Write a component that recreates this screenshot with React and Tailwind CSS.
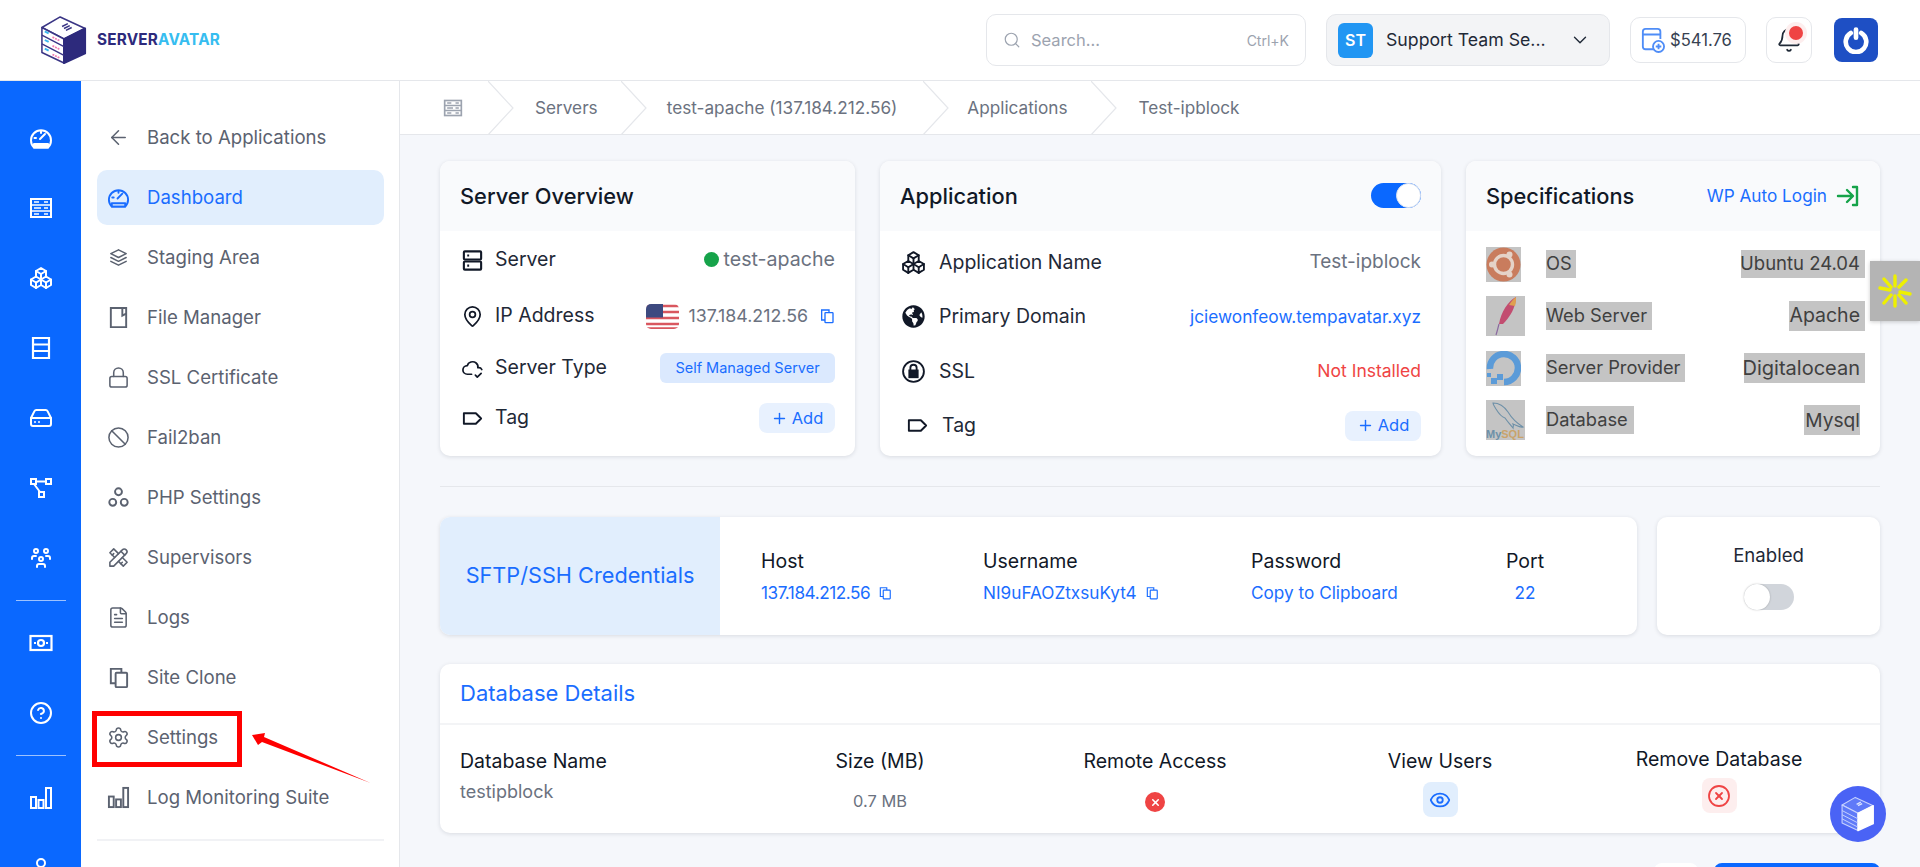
import {
  ArrowLeft,
  Lock,
  Ban,
  Settings,
  FileText,
  Search,
  ChevronDown,
  Bell,
  MapPin,
  Plus,
  HardDrive,
  CircleHelp,
  User,
  Eye,
  CircleX,
  X,
} from "lucide-react";
import {
  TbStack2,
  TbTools,
  TbCloudCheck,
  TbPackages,
  TbUsersGroup,
} from "react-icons/tb";
import { FaGlobeAmericas } from "react-icons/fa";

const TagIcon = ({ className }) => (
  <svg viewBox="0 0 24 24" fill="none" stroke="currentColor" strokeWidth="2" strokeLinejoin="round" className={className}>
    <path d="M3 6.5h12.5l5.5 5.5-5.5 5.500H3z" />
  </svg>
);

const CopyIcon = ({ className }) => (
  <svg viewBox="0 0 24 24" fill="none" stroke="currentColor" strokeWidth="2" className={className}>
    <rect x="9" y="7" width="12" height="15" rx="1" />
    <path d="M9 18H4V3h11v4" />
  </svg>
);

const FileCornerIcon = ({ className }) => (
  <svg viewBox="0 0 24 24" fill="none" stroke="currentColor" strokeWidth="2" className={className}>
    <path d="M4 2h16v20H4z" />
    <path d="M16 2v8l4-2" />
  </svg>
);

const CirclesIcon = ({ className }) => (
  <svg viewBox="0 0 24 24" fill="none" stroke="currentColor" strokeWidth="2" className={className}>
    <circle cx="12" cy="6" r="3.6" />
    <circle cx="6" cy="17" r="3.6" />
    <circle cx="18" cy="17" r="3.6" />
  </svg>
);

const BarsIcon = ({ className }) => (
  <svg viewBox="0 0 24 24" fill="none" stroke="currentColor" strokeWidth="2" className={className}>
    <rect x="2" y="11" width="5" height="11" />
    <rect x="9.5" y="14" width="5" height="8" />
    <rect x="17" y="2" width="5" height="20" />
  </svg>
);

const TableIcon = ({ className }) => (
  <svg viewBox="0 0 24 24" fill="none" stroke="currentColor" strokeWidth="2" className={className}>
    <rect x="2" y="3" width="20" height="18" />
    <path d="M2 9h20M2 15h20M5 6h5M15 6h4M5 12h7M15 12h4M5 18h5M15 18h4" strokeWidth="1.6" />
  </svg>
);

const NodesIcon = ({ className }) => (
  <svg viewBox="0 0 24 24" fill="none" stroke="currentColor" strokeWidth="2" className={className}>
    <rect x="2" y="3" width="5" height="5" />
    <rect x="17" y="3" width="5" height="5" />
    <rect x="10" y="16" width="5" height="5" />
    <path d="M7 5.5h10M5 8l6 8" />
  </svg>
);

const LockCircleIcon = ({ className }) => (
  <svg viewBox="0 0 24 24" fill="none" stroke="currentColor" strokeWidth="1.8" className={className}>
    <circle cx="12" cy="12" r="10" />
    <path d="M9 11V8.5a3 3 0 0 1 6 0V11" />
    <rect x="8" y="11" width="8" height="6.5" fill="currentColor" />
  </svg>
);

// speedometer with a band along the bottom, used in the rail and the menu
const GaugeIcon = ({ className, band = "none" }) => (
  <svg viewBox="0 0 24 24" fill="none" stroke="currentColor" strokeWidth="2" strokeLinecap="round" strokeLinejoin="round" className={className}>
    <path d="M5 21.500h14a10 10 0 1 0-14 0z" />
    <path d="M5 18h14v3.500H5z" fill={band} />
    <path d="M11 13l5-5M5.500 12H7M12 5.500V7" />
  </svg>
);

const RailGauge = ({ className }) => <GaugeIcon className={className} band="currentColor" />;

const ListIcon = ({ className }) => (
  <svg viewBox="0 0 24 24" fill="none" stroke="currentColor" strokeWidth="2.2" className={className}>
    <path d="M4 2h16v20H4zM4 8.500h16M4 15h16" />
  </svg>
);

const MoneyIcon = ({ className }) => (
  <svg viewBox="0 0 24 24" fill="none" stroke="currentColor" strokeWidth="2.2" className={className}>
    <rect x="1.500" y="5" width="21" height="14" />
    <circle cx="12" cy="12" r="3" />
    <path d="M5 12h2M17 12h2" />
  </svg>
);

const ServerIcon = ({ className }) => (
  <svg viewBox="0 0 24 24" fill="none" stroke="currentColor" strokeWidth="2.2" strokeLinejoin="round" className={className}>
    <rect x="3" y="2.500" width="18" height="8.500" rx="1" />
    <rect x="3" y="13" width="18" height="8.500" rx="1" />
    <path d="M6.500 6.800h2M6.500 17.300h2" />
  </svg>
);

const CubeLogo = ({ className }) => (
  <svg viewBox="0 0 50 52" className={className}>
    <path d="M21 2 47 14 25 25 2 13z" fill="#fff" stroke="#3a3585" strokeWidth="1.6" strokeLinejoin="round" />
    <path d="M2 13 25 25V50L2 39z" fill="#fff" stroke="#3a3585" strokeWidth="1.6" strokeLinejoin="round" />
    <path d="M25 25 47 14V40L25 50z" fill="#2d2a7c" stroke="#2d2a7c" strokeWidth="2" strokeLinejoin="round" />
    <path d="M2 21 25 33M2 30 25 42" stroke="#3a3585" strokeWidth="1.4" />
    <path d="M5 17l4 2M5 26l4 2M5 35l4 2" stroke="#39b6ee" strokeWidth="2" />
    <path d="M13 23l8 4M13 32l8 4M13 41l8 4" stroke="#f27ab0" strokeWidth="1.8" strokeDasharray="2 1" />
    <path d="M23 12l6-3M25 14l6-3M27 16l6-3" stroke="#3a3585" strokeWidth="1.6" />
  </svg>
);

const railTop = [RailGauge, TableIcon, TbPackages, ListIcon, HardDrive, NodesIcon, TbUsersGroup];

const RailItem = ({ icon: Icon }) => (
  <div className="flex h-[70px] w-full shrink-0 items-center justify-center">
    <Icon className="size-[24px] text-white" strokeWidth={2} />
  </div>
);

const Rail = () => (
  <div className="flex w-[81px] shrink-0 flex-col items-center bg-[#0a68ff] pt-[22px]">
    {railTop.map((Icon, i) => (
      <RailItem key={i} icon={Icon} />
    ))}
    <div className="my-[7px] h-px w-[50px] shrink-0 bg-white/60" />
    <RailItem icon={MoneyIcon} />
    <RailItem icon={CircleHelp} />
    <div className="my-[7px] h-px w-[50px] shrink-0 bg-white/60" />
    <RailItem icon={BarsIcon} />
    <RailItem icon={User} />
  </div>
);

const menu = [
  { label: "Back to Applications", icon: ArrowLeft },
  { label: "Dashboard", icon: GaugeIcon, active: true },
  { label: "Staging Area", icon: TbStack2 },
  { label: "File Manager", icon: FileCornerIcon },
  { label: "SSL Certificate", icon: Lock },
  { label: "Fail2ban", icon: Ban },
  { label: "PHP Settings", icon: CirclesIcon },
  { label: "Supervisors", icon: TbTools },
  { label: "Logs", icon: FileText },
  { label: "Site Clone", icon: CopyIcon },
  { label: "Settings", icon: Settings },
  { label: "Log Monitoring Suite", icon: BarsIcon },
];

const SubMenu = () => (
  <aside className="flex w-[319px] shrink-0 flex-col gap-[5px] border-r border-[#e5e7eb] bg-white pt-[29px] pr-[15px] pl-[16px]">
    {menu.map((m) => (
      <div
        key={m.label}
        className={`flex h-[55px] shrink-0 items-center gap-[17px] rounded-[10px] pl-[10px] text-[18.6px] ${
          m.active ? "bg-[#e1eefd] text-[#1a6dff]" : "text-[#5b6270]"
        }`}
      >
        <m.icon className="size-[23px]" strokeWidth={1.6} />
        {m.label}
      </div>
    ))}
    <div className="mt-[9px] h-[2px] shrink-0 bg-[#f1f2f5]" />
  </aside>
);

const Chevron = () => (
  <svg viewBox="0 0 26 54" fill="none" className="h-[54px] w-[26px] shrink-0">
    <path d="M0 0 25 27 0 54" stroke="#e5e7eb" strokeWidth="1.2" />
  </svg>
);

const Breadcrumb = () => (
  <div className="flex h-[54px] shrink-0 items-center border-b border-[#e5e7eb] bg-white pl-[43px] text-[17.2px] text-[#6b7280]">
    <TableIcon className="mr-[25px] size-[20px] text-[#9ca3af]" />
    <Chevron />
    <span className="mr-[23px] ml-[21px]">Servers</span>
    <Chevron />
    <span className="mr-[26px] ml-[20px]">test-apache (137.184.212.56)</span>
    <Chevron />
    <span className="mr-[23px] ml-[18px]">Applications</span>
    <Chevron />
    <span className="ml-[22px]">Test-ipblock</span>
  </div>
);

const Card = ({ className, children }) => (
  <div className={`overflow-hidden rounded-[10px] bg-white shadow-[0_1px_4px_rgba(17,24,39,0.12)] ${className}`}>{children}</div>
);

const CardHead = ({ title, children }) => (
  <div className="flex h-[70px] items-center justify-between bg-[#f9fafc] px-[20px] text-[21.8px] font-medium text-[#111827]">
    {title}
    {children}
  </div>
);

const AddBtn = () => (
  <button className="flex h-[30px] w-[76px] items-center justify-center gap-[4px] rounded-[8px] bg-[#e8f1fe] text-[16.5px] text-[#1a6dff]">
    <Plus className="size-[17px]" />
    Add
  </button>
);

const Row = ({ icon: Icon, label, h, iconClass = "size-[23px]", gap = "gap-[11px]", children }) => (
  <div className={`flex items-center justify-between ${h}`}>
    <div className={`flex items-center ${gap} text-[19.5px] text-[#1f2937]`}>
      <Icon className={`${iconClass} text-[#111827]`} strokeWidth={1.8} />
      {label}
    </div>
    {children}
  </div>
);

const UsFlag = () => (
  <svg viewBox="0 0 33 25" className="h-[25px] w-[33px] overflow-hidden rounded-[5px]">
    <rect width="33" height="25" fill="#fff" />
    <path d="M0 2h33M0 8h33M0 14h33M0 20h33M0 24.500h33" stroke="#d9575f" strokeWidth="2.6" />
    <rect width="17" height="13.500" fill="#3d4a80" />
  </svg>
);

const ServerOverview = () => (
  <Card className="w-[415px] shrink-0">
    <CardHead title="Server Overview" />
    <div className="pt-px pr-[20px] pl-[21px]">
      <Row icon={ServerIcon} label="Server" h="h-[56px]">
        <div className="flex items-center gap-[5px] text-[19.6px] text-[#6b7280]">
          <span className="size-[15px] rounded-full bg-[#16a34a]" />
          test-apache
        </div>
      </Row>
      <Row icon={MapPin} label="IP Address" h="h-[56px]">
        <div className="flex items-center text-[17.8px] text-[#6b7280]">
          <UsFlag />
          <span className="mr-[11px] ml-[9px]">137.184.212.56</span>
          <CopyIcon className="size-[16px] text-[#1a6dff]" />
        </div>
      </Row>
      <Row icon={TbCloudCheck} label="Server Type" h="h-[48px]">
        <span className="flex h-[30px] w-[175px] items-center justify-center rounded-[6px] bg-[#dbe9fe] text-[14.5px] text-[#1a6dff]">
          Self Managed Server
        </span>
      </Row>
      <Row icon={TagIcon} label="Tag" h="h-[52px]">
        <AddBtn />
      </Row>
    </div>
  </Card>
);

const ApplicationCard = () => (
  <Card className="w-[561px] shrink-0">
    <CardHead title="Application">
      <span className="relative mb-[2px] block h-[25px] w-[50px] rounded-full bg-[#0a68ff]">
        <span className="absolute top-0 right-0 size-[25px] rounded-full border border-[#dbe3f0] bg-white" />
      </span>
    </CardHead>
    <div className="pt-[4px] pr-[20px] pl-[21px]">
      <Row icon={TbPackages} label="Application Name" h="h-[54.5px]" iconClass="size-[25px]" gap="gap-[13px]">
        <span className="text-[19px] text-[#6b7280]">Test-ipblock</span>
      </Row>
      <Row icon={FaGlobeAmericas} label="Primary Domain" h="h-[54.5px]" iconClass="size-[23px] mx-px" gap="gap-[13px]">
        <span className="text-[17.3px] text-[#1a6dff]">jciewonfeow.tempavatar.xyz</span>
      </Row>
      <Row icon={LockCircleIcon} label="SSL" h="h-[54.5px]" iconClass="size-[25px]" gap="gap-[13px]">
        <span className="text-[17.5px] text-[#ef4444]">Not Installed</span>
      </Row>
      <Row icon={TagIcon} label="Tag" h="h-[54.5px]" iconClass="size-[23px] ml-[5px]" gap="gap-[13px]">
        <AddBtn />
      </Row>
    </div>
  </Card>
);

const UbuntuLogo = () => (
  <svg viewBox="0 0 35 35" className="size-full">
    <rect width="35" height="35" fill="#c4c4c4" />
    <circle cx="17.500" cy="17.500" r="17" fill="#c97c5d" />
    <circle cx="17.500" cy="17.500" r="9" fill="none" stroke="#e5d3c8" strokeWidth="3.400" />
    <circle cx="6" cy="17.500" r="3" fill="#e5d3c8" />
    <circle cx="23.500" cy="7.500" r="3" fill="#e5d3c8" />
    <circle cx="23.500" cy="27.500" r="3" fill="#e5d3c8" />
  </svg>
);

const ApacheLogo = () => (
  <svg viewBox="0 0 39 40" className="size-full">
    <rect width="39" height="40" fill="#c4c4c4" />
    <path d="M30 1C22 5 15 16 13 28l4 0C24 21 30 11 30 1z" fill="#c24d70" />
    <path d="M30 1C27 3 25 6 23 9l6 1C30 7 30 4 30 1z" fill="#dfa04f" />
    <path d="M13 28c-1 4-2 8-3 11" stroke="#8b6aa0" strokeWidth="1.2" fill="none" />
  </svg>
);

const OceanLogo = () => (
  <svg viewBox="0 0 35 35" className="size-full">
    <rect width="35" height="35" fill="#c4c4c4" />
    <path d="M4 18A14 14 0 1 1 18 31" fill="none" stroke="#5b9bd8" strokeWidth="6.500" />
    <path d="M11 23h6v6h-6zM5 27h6v6H5zM1 22h4v4H1z" fill="#5b9bd8" />
  </svg>
);

const MysqlLogo = () => (
  <svg viewBox="0 0 39 40" className="size-full">
    <rect width="39" height="40" fill="#c4c4c4" />
    <path d="M7 3c6 0 11 3 15 9 3 5 7 10 15 15-3 1-7-2-10-3 1 2 0 3 0 4-3-4-6-7-8-10-3-1-6-4-9-9-1-2-3-4-3-6z" fill="none" stroke="#6d90a8" strokeWidth="1.1" />
    <text x="0" y="38" fontSize="11" fontWeight="700" fill="#6d90a8" fontFamily="Liberation Sans, sans-serif">My<tspan fill="#c9a36a">SQL</tspan></text>
  </svg>
);

const Hl = ({ className, children }) => (
  <span className={`flex items-center justify-end whitespace-nowrap bg-[#c4c4c4] text-[#404040] ${className}`}>{children}</span>
);

const specs = [
  { logo: UbuntuLogo, box: "size-[35px] mr-[25px]", label: "OS", lw: "w-[30px] h-[28px] justify-start", val: "Ubuntu 24.04", vw: "w-[124px] h-[28px] pr-[5px] text-[18.5px]" },
  { logo: ApacheLogo, box: "h-[40px] w-[39px] mr-[21px]", label: "Web Server", lw: "w-[106px] h-[28px] justify-start", val: "Apache", vw: "w-[76px] h-[30px] pr-[5px] text-[19.5px]" },
  { logo: OceanLogo, box: "size-[35px] mr-[25px]", label: "Server Provider", lw: "w-[139px] h-[28px] justify-start", val: "Digitalocean", vw: "w-[121px] h-[30px] pr-[5px] text-[20px]" },
  { logo: MysqlLogo, box: "h-[40px] w-[39px] mr-[21px]", label: "Database", lw: "w-[88px] h-[28px] justify-start", val: "Mysql", vw: "w-[56px] h-[30px] mr-[5px] text-[19.2px]" },
];

const Specifications = () => (
  <Card className="flex-1">
    <CardHead title="Specifications">
      <a className="flex items-center gap-[9px] text-[17.2px] font-normal text-[#1a6dff]">
        WP Auto Login
        <svg viewBox="0 0 24 24" fill="none" stroke="#16a34a" strokeWidth="2.4" strokeLinecap="round" strokeLinejoin="round" className="size-[24px]">
          <path d="M2 12h14M11 6l6 6-6 6M17 3h4v18h-4" />
        </svg>
      </a>
    </CardHead>
    <div className="pt-[7px] pr-[15px] pl-[20px]">
      {specs.map((s) => (
        <div key={s.label} className="flex h-[52px] items-center justify-between text-[18.3px]">
          <div className="flex items-center">
            <div className={`shrink-0 ${s.box}`}>
              <s.logo />
            </div>
            <Hl className={s.lw}>{s.label}</Hl>
          </div>
          <Hl className={s.vw}>{s.val}</Hl>
        </div>
      ))}
    </div>
  </Card>
);

const Cred = ({ label, className, center, children }) => (
  <div className={`flex flex-col gap-[10px] pt-[2px] ${center ? "items-center" : ""} ${className}`}>
    <span className="text-[19.5px] leading-[22px] text-[#111827]">{label}</span>
    <span className="flex items-center gap-[8px] text-[17.2px] leading-[22px] text-[#1a6dff]">{children}</span>
  </div>
);

const SftpCard = () => (
  <div className="flex gap-[20px]">
    <Card className="flex h-[118px] flex-1">
      <div className="flex w-[280px] shrink-0 items-center justify-center bg-[#e1eefd] pb-[2px] text-[21.7px] text-[#1a6dff]">
        SFTP/SSH Credentials
      </div>
      <div className="flex flex-1 items-center">
        <Cred label="Host" className="ml-[41px] w-[222px]">
          <span className="tracking-[-0.45px]">137.184.212.56</span>
          <CopyIcon className="size-[14px]" />
        </Cred>
        <Cred label="Username" className="w-[268px]">
          NI9uFAOZtxsuKyt4
          <CopyIcon className="size-[14px]" />
        </Cred>
        <Cred label="Password" className="w-[255px]">
          Copy to Clipboard
        </Cred>
        <Cred label="Port" center>
          22
        </Cred>
      </div>
    </Card>
    <Card className="flex h-[118px] w-[223px] shrink-0 flex-col items-center pt-[27px]">
      <span className="text-[18.6px] leading-[22px] text-[#1f2937]">Enabled</span>
      <span className="relative mt-[18px] block h-[26px] w-[50px] rounded-full bg-[#d1d5db]">
        <span className="absolute top-0 left-0 size-[26px] rounded-full bg-white shadow-[0_0_2px_rgba(0,0,0,0.25)]" />
      </span>
    </Card>
  </div>
);

const DbCol = ({ label, className, children }) => (
  <div className={`flex flex-col items-center ${className}`}>
    <span className="whitespace-nowrap text-[19.5px] leading-[24px] text-[#111827]">{label}</span>
    {children}
  </div>
);

const DatabaseCard = () => (
  <Card className="h-[169px]">
    <div className="flex h-[61px] items-center border-b-2 border-[#f3f4f6] px-[20px] text-[22px] text-[#1a6dff]">Database Details</div>
    <div className="flex px-[20px] pt-[24px]">
      <div className="w-[340px] shrink-0">
        <div className="text-[19.5px] leading-[24px] text-[#111827]">Database Name</div>
        <div className="mt-[7px] text-[18px] leading-[24px] text-[#6b7280]">testipblock</div>
      </div>
      <DbCol label="Size (MB)" className="w-[160px] shrink-0">
        <span className="mt-[16px] text-[16.4px] leading-[24px] text-[#6b7280]">0.7 MB</span>
      </DbCol>
      <DbCol label="Remote Access" className="ml-[115px] w-[160px] shrink-0">
        <span className="mt-[19px] flex size-[20px] items-center justify-center rounded-full bg-[#ef4444]">
          <X className="size-[11px] text-white" strokeWidth={3.5} />
        </span>
      </DbCol>
      <DbCol label="View Users" className="ml-[125px] w-[160px] shrink-0">
        <span className="mt-[9px] flex size-[35px] items-center justify-center rounded-[8px] bg-[#e1eefd]">
          <Eye className="size-[22px] text-[#1a6dff]" />
        </span>
      </DbCol>
      <DbCol label="Remove Database" className="ml-[119px] w-[160px] shrink-0 -mt-[2px]">
        <span className="mt-[7px] flex size-[35px] items-center justify-center rounded-[8px] bg-[#fdeeee]">
          <CircleX className="size-[24px] text-[#ef4444]" strokeWidth={1.8} />
        </span>
      </DbCol>
    </div>
  </Card>
);

const Header = () => (
  <header className="flex h-[81px] shrink-0 items-center border-b border-[#e5e7eb] bg-white pr-[42px] pl-[40px]">
    <CubeLogo className="h-[50px] w-[48px]" />
    <span className="ml-[9px] text-[15.3px] font-bold tracking-[0.2px] text-[#2d2a7c]">
      SERVER<span className="text-[#36bdf0]">AVATAR</span>
    </span>
    <div className="ml-auto flex h-[52px] w-[320px] items-center rounded-[10px] border border-[#e5e7eb] px-[16px] text-[#9ca3af]">
      <Search className="size-[18px]" strokeWidth={1.6} />
      <span className="ml-[10px] text-[16.5px]">Search...</span>
      <span className="ml-auto text-[14px]">Ctrl+K</span>
    </div>
    <div className="ml-[20px] flex h-[52px] w-[284px] items-center rounded-[10px] border border-[#e5e7eb] bg-[#f3f4f6] pr-[18px] pl-[11px] text-[17.7px] text-[#1f2937]">
      <span className="flex size-[35px] items-center justify-center rounded-[6px] bg-[#2196f3] text-[16px] font-semibold text-white">ST</span>
      <span className="ml-[13px]">Support Team Se...</span>
      <ChevronDown className="ml-auto size-[22px]" strokeWidth={1.5} />
    </div>
    <div className="ml-[20px] flex h-[46px] w-[116px] items-center gap-[5px] rounded-[10px] border border-[#e5e7eb] pl-[10px] text-[16.6px] text-[#374151]">
      <svg viewBox="0 0 26 28" fill="none" stroke="#4f8df7" strokeWidth="2" className="h-[26px] w-[24px] shrink-0">
        <path d="M14 24H5a3 3 0 0 1-3-3V5a3 3 0 0 1 3-3h13a3 3 0 0 1 3 3v8M2 8h19" />
        <circle cx="19" cy="21" r="6" fill="#fff" />
        <path d="M19 18v6M16 21h6" />
      </svg>
      $541.76
    </div>
    <div className="relative ml-[20px] flex size-[46px] items-center justify-center rounded-[10px] border border-[#e5e7eb]">
      <Bell className="size-[26px] text-[#1f2937]" strokeWidth={1.6} />
      <span className="absolute top-[4px] right-[4px] flex size-[22px] items-center justify-center rounded-full bg-[#fdeeee]">
        <span className="size-[14px] rounded-full bg-[#ef4444]" />
      </span>
    </div>
    <div className="ml-[22px] flex size-[44px] items-center justify-center rounded-[8px] bg-[#1e4fc4]">
      <svg viewBox="0 0 24 24" fill="none" stroke="#fff" strokeWidth="4" strokeLinecap="round" className="size-[28px]">
        <path d="M7.500 6a8.800 8.800 0 1 0 9 0M12 3v7" />
      </svg>
    </div>
  </header>
);

export default function App() {
  return (
    <div className="relative flex h-screen flex-col overflow-hidden bg-white font-['Inter',sans-serif]">
      <Header />
      <div className="flex min-h-0 flex-1">
        <Rail />
        <SubMenu />
        <main className="flex min-w-0 flex-1 flex-col bg-[#f5f7fb]">
          <Breadcrumb />
          <div className="px-[40px] pt-[26px]">
            <div className="flex h-[295px] gap-[25px]">
              <ServerOverview />
              <ApplicationCard />
              <Specifications />
            </div>
            <div className="mt-[30px] h-px bg-[#e5e7eb]" />
            <div className="mt-[30px]">
              <SftpCard />
            </div>
            <div className="mt-[29px]">
              <DatabaseCard />
            </div>
            <div className="mt-[30px] flex justify-end gap-[16px]">
              <div className="h-[40px] w-[44px] rounded-[8px] bg-white" />
              <div className="h-[40px] w-[166px] rounded-[8px] bg-[#0a68ff]" />
            </div>
          </div>
        </main>
      </div>

      {/* annotation drawn over the screenshot */}
      <div className="absolute top-[711px] left-[92px] h-[56px] w-[150px] border-[5px] border-[#ff0000]" />
      <svg viewBox="0 0 124 56" className="absolute top-[730px] left-[250px] h-[56px] w-[124px]">
        <path d="M2 5 15 3 14 7 120.600 53 12 12 8 15z" fill="#ff0000" />
      </svg>

      {/* floating widgets */}
      <div className="absolute top-[261px] right-0 flex h-[60px] w-[50px] items-center justify-center bg-[#b4b4b4] shadow-[0_1px_4px_rgba(0,0,0,0.2)]">
        <svg viewBox="0 0 34 34" stroke="#eef000" strokeWidth="3.400" strokeLinecap="round" className="size-[34px]">
          <path d="M17 2v10M17 22v10M2 14l10 2M22 18l10 2M6 5l7 8M21 21l7 8M28 6l-7 7M13 21l-7 8" />
        </svg>
      </div>
      <div className="absolute top-[786px] left-[1830px] flex h-[56px] w-[56px] items-center justify-center rounded-full bg-[#4a63f5]">
        <svg viewBox="0 0 50 52" className="size-[36px]">
          <path d="M21 2 47 14 25 25 2 13z" fill="#5f7af8" stroke="#c7d2fe" strokeWidth="1.6" strokeLinejoin="round" />
          <path d="M2 13 25 25V50L2 39z" fill="#5f7af8" stroke="#c7d2fe" strokeWidth="1.6" strokeLinejoin="round" />
          <path d="M25 25 47 14V40L25 50z" fill="#fff" stroke="#fff" strokeWidth="2" strokeLinejoin="round" />
          <path d="M2 21 25 33M2 27 25 39M2 33 25 45" stroke="#c7d2fe" strokeWidth="1.400" />
          <path d="M23 12l6-3M25 14l6-3" stroke="#dbe4ff" strokeWidth="2" />
        </svg>
      </div>
    </div>
  );
}
